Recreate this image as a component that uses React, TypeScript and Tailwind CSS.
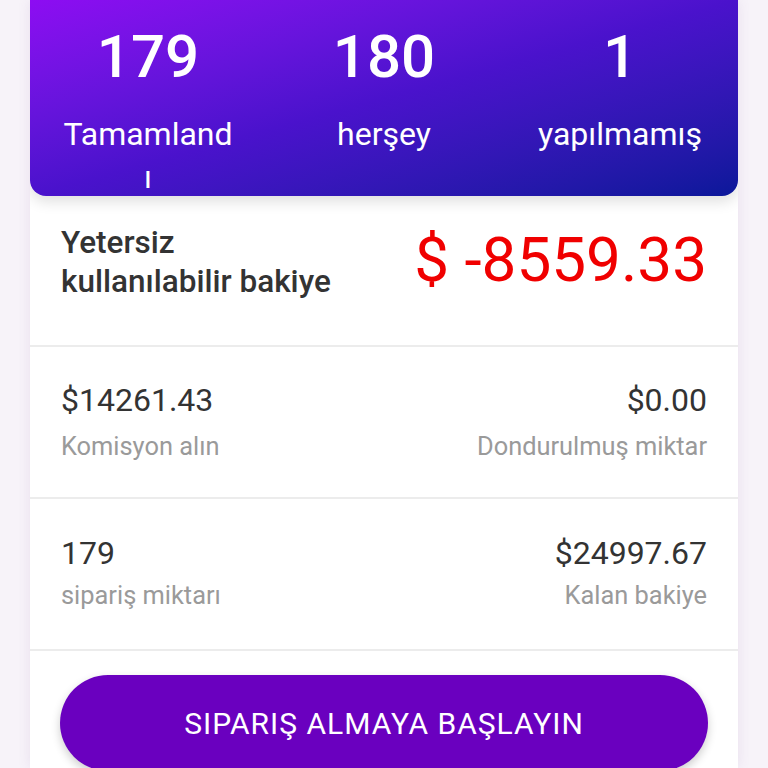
import React from 'react';

const stats = [
  { value: '179', label: <>Tamamland<br />ı</> },
  { value: '180', label: <>herşey</> },
  { value: '1', label: <>yapılmamış</> },
];

function InfoRow({ left, leftLabel, right, rightLabel, top, gap }: { left: string; leftLabel: string; right: string; rightLabel: string; top: string; gap: string }) {
  return (
    <div className={`flex justify-between h-[152px] border-b-2 border-[#ececec] px-[31px] ${top}`}>
      <div>
        <div className="text-[32px] leading-[40px] text-[#333]">{left}</div>
        <div className={`text-[25.4px] leading-[32px] text-[#9a9a9a] ${gap}`}>{leftLabel}</div>
      </div>
      <div className="text-right">
        <div className="text-[32px] leading-[40px] text-[#333]">{right}</div>
        <div className={`text-[25.4px] leading-[32px] text-[#9a9a9a] ${gap}`}>{rightLabel}</div>
      </div>
    </div>
  );
}

export default function App() {
  return (
    <div className="min-h-screen bg-[#f7f3f9] px-[30px] font-['Roboto',sans-serif]">
      <div className="bg-white shadow-[0_0_12px_rgba(120,80,160,0.12)] h-[768px] overflow-hidden">
        {/* header */}
        <div className="relative z-10 h-[196px] rounded-b-[16px] bg-linear-to-br from-[#8d0cf2] via-[#4a12cc] to-[#0a189a] shadow-[0_6px_14px_rgba(0,0,0,0.12)] grid grid-cols-3 text-center text-white pt-[27px]">
          {stats.map((s) => (
            <div key={s.value}>
              <div className="text-[60px] leading-[60px] font-medium">{s.value}</div>
              <div className="mt-[26px] text-[32px] leading-[43px]">{s.label}</div>
            </div>
          ))}
        </div>

        {/* balance */}
        <div className="flex justify-between items-start h-[151px] border-b-2 border-[#ececec] px-[31px] pt-[27px]">
          <div className="text-[31.5px] leading-[39px] font-medium text-[#333]">
            Yetersiz
            <br />
            kullanılabilir bakiye
          </div>
          <div className="mt-[5px] text-[62px] leading-[64px] text-[#f00000]">$ -8559.33</div>
        </div>

        <InfoRow left="$14261.43" leftLabel="Komisyon alın" right="$0.00" rightLabel="Dondurulmuş miktar" top="pt-[33px]" gap="mt-[10px]" />
        <InfoRow left="179" leftLabel="sipariş miktarı" right="$24997.67" rightLabel="Kalan bakiye" top="pt-[34px]" gap="mt-[6px]" />

        {/* action */}
        <div className="px-[30px] pt-[24px]">
          <button className="w-full h-[96px] rounded-full bg-[#6a00bf] text-white text-[30px] tracking-[1px] shadow-[0_4px_10px_rgba(0,0,0,0.2)]">
            SIPARIŞ ALMAYA BAŞLAYIN
          </button>
        </div>
      </div>
    </div>
  );
}
